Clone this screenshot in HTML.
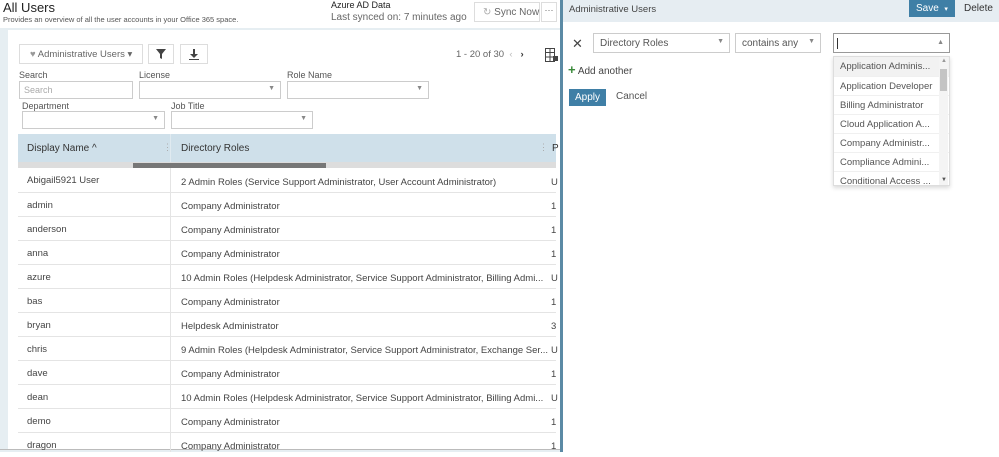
<!DOCTYPE html>
<html><head><meta charset="utf-8"><style>
*{box-sizing:border-box;margin:0;padding:0}
body{width:999px;height:452px;overflow:hidden;font-family:"Liberation Sans",sans-serif;background:#fff;position:relative;color:#333;white-space:nowrap}
.a{position:absolute}
.sel{position:absolute;border:1px solid #ccc;background:#fff;height:18px}
.sel:after{content:"▼";position:absolute;right:5px;top:50%;margin-top:-5px;font-size:7px;color:#888}
.lbl{position:absolute;font-size:9px;color:#555}
.row{position:absolute;left:18px;width:538px;height:24px;border-bottom:1px solid #e4e4e4;font-size:9.5px;color:#444}
.row span{position:absolute;top:7px}
</style></head><body>
<div class="a" style="left:0;top:28px;width:560px;height:424px;background:#e6eef2"></div>
<div class="a" style="left:8px;top:30px;width:552px;height:420px;background:#fff"></div>
<div class="a" style="left:0;top:449px;width:560px;height:1px;background:#bbb"></div>
<div class="a" style="left:3px;top:0;font-size:13px;color:#222">All Users</div>
<div class="a" style="left:3px;top:15px;font-size:7.5px;color:#555">Provides an overview of all the user accounts in your Office 365 space.</div>
<div class="a" style="left:331px;top:0;font-size:9px;color:#222">Azure AD Data</div>
<div class="a" style="left:331px;top:12px;font-size:10px;color:#666">Last synced on: 7 minutes ago</div>
<div class="a" style="left:474px;top:2px;width:66px;height:20px;border:1px solid #ddd;font-size:10px;color:#666;padding:4px 0 0 8px"><span style="color:#aaa">↻</span> Sync Now</div>
<div class="a" style="left:541px;top:2px;width:16px;height:20px;border:1px solid #ddd;font-size:9px;color:#666;text-align:center;line-height:14px">···</div>

<div class="a" style="left:19px;top:44px;width:124px;height:20px;border:1px solid #ddd;font-size:9.5px;color:#666;padding:4px 0 0 10px"><span style="color:#999">♥</span> Administrative Users ▾</div>
<div class="a" style="left:148px;top:44px;width:26px;height:20px;border:1px solid #ddd;text-align:center"><svg width="10" height="10" viewBox="0 0 10 10" style="margin-top:4px"><path d="M0 0H10L6 5V10L4 9V5Z" fill="#444"/></svg></div>
<div class="a" style="left:180px;top:44px;width:28px;height:20px;border:1px solid #ddd;text-align:center"><svg width="10" height="11" viewBox="0 0 10 11" style="margin-top:4px"><path d="M4 0H6V5H9L5 9L1 5H4Z M0 10H10V11H0Z" fill="#444"/></svg></div>
<div class="a" style="left:456px;top:49px;font-size:9.5px;color:#666">1 - 20 of 30 &nbsp;<span style="color:#bbb">‹</span> &nbsp;&nbsp;<b style="color:#333">›</b></div>
<svg class="a" style="left:545px;top:48px" width="13" height="14" viewBox="0 0 13 14"><path d="M0.5 0.5H9.5V13.5H0.5Z M0.5 4.5H9.5 M0.5 9H9.5 M5 0.5V13.5" stroke="#444" fill="none"/><rect x="8" y="8" width="5" height="5" fill="#444"/></svg>

<div class="lbl" style="left:19px;top:70px">Search</div>
<div class="a" style="left:19px;top:81px;width:114px;height:18px;border:1px solid #ccc;font-size:9px;color:#aaa;padding:3px 0 0 4px">Search</div>
<div class="lbl" style="left:139px;top:70px">License</div>
<div class="sel" style="left:139px;top:81px;width:142px"></div>
<div class="lbl" style="left:287px;top:70px">Role Name</div>
<div class="sel" style="left:287px;top:81px;width:142px"></div>
<div class="lbl" style="left:22px;top:101px">Department</div>
<div class="sel" style="left:22px;top:111px;width:143px"></div>
<div class="lbl" style="left:171px;top:101px">Job Title</div>
<div class="sel" style="left:171px;top:111px;width:142px"></div>

<div class="a" style="left:18px;top:134px;width:538px;height:28px;background:#cfe0ea"></div>
<div class="a" style="left:27px;top:143px;font-size:10px;color:#333">Display Name ^</div>
<div class="a" style="left:163px;top:142px;font-size:9px;color:#aaa">⋮</div>
<div class="a" style="left:170px;top:134px;width:1px;height:28px;background:#e0eaf0"></div>
<div class="a" style="left:181px;top:143px;font-size:10px;color:#333">Directory Roles</div>
<div class="a" style="left:539px;top:142px;font-size:9px;color:#aaa">⋮</div>
<div class="a" style="left:552px;top:143px;font-size:10px">P</div>
<div class="a" style="left:18px;top:162px;width:538px;height:6px;background:#ddd"></div>
<div class="a" style="left:133px;top:163px;width:193px;height:5px;background:#777"></div>
<div class="a" style="left:170px;top:168px;width:1px;height:284px;background:#e4e4e4"></div>

<div class="row" style="top:169px"><span style="left:9px;top:6px">Abigail5921 User</span><span style="left:163px;top:8px">2 Admin Roles (Service Support Administrator, User Account Administrator)</span><span style="left:533px;top:8px">U</span></div>
<div class="row" style="top:193px"><span style="left:9px">admin</span><span style="left:163px;top:8px">Company Administrator</span><span style="left:533px;top:8px">1</span></div>
<div class="row" style="top:217px"><span style="left:9px">anderson</span><span style="left:163px;top:8px">Company Administrator</span><span style="left:533px;top:8px">1</span></div>
<div class="row" style="top:241px"><span style="left:9px">anna</span><span style="left:163px;top:8px">Company Administrator</span><span style="left:533px;top:8px">1</span></div>
<div class="row" style="top:265px"><span style="left:9px">azure</span><span style="left:163px;top:8px">10 Admin Roles (Helpdesk Administrator, Service Support Administrator, Billing Admi...</span><span style="left:533px;top:8px">U</span></div>
<div class="row" style="top:289px"><span style="left:9px">bas</span><span style="left:163px;top:8px">Company Administrator</span><span style="left:533px;top:8px">1</span></div>
<div class="row" style="top:313px"><span style="left:9px">bryan</span><span style="left:163px;top:8px">Helpdesk Administrator</span><span style="left:533px;top:8px">3</span></div>
<div class="row" style="top:337px"><span style="left:9px">chris</span><span style="left:163px;top:8px">9 Admin Roles (Helpdesk Administrator, Service Support Administrator, Exchange Ser...</span><span style="left:533px;top:8px">U</span></div>
<div class="row" style="top:361px"><span style="left:9px">dave</span><span style="left:163px;top:8px">Company Administrator</span><span style="left:533px;top:8px">1</span></div>
<div class="row" style="top:385px"><span style="left:9px">dean</span><span style="left:163px;top:8px">10 Admin Roles (Helpdesk Administrator, Service Support Administrator, Billing Admi...</span><span style="left:533px;top:8px">U</span></div>
<div class="row" style="top:409px"><span style="left:9px">demo</span><span style="left:163px;top:8px">Company Administrator</span><span style="left:533px;top:8px">1</span></div>
<div class="row" style="top:433px;border:0"><span style="left:9px">dragon</span><span style="left:163px;top:8px">Company Administrator</span><span style="left:533px;top:8px">1</span></div>

<div class="a" style="left:560px;top:0;width:3px;height:452px;background:#5b8aa5"></div>
<div class="a" style="left:563px;top:0;width:436px;height:22px;background:#e6edf2"></div>
<div class="a" style="left:569px;top:4px;font-size:9.5px;color:#444">Administrative Users</div>
<div class="a" style="left:909px;top:0;width:46px;height:17px;background:#3f7fa6;color:#fff;font-size:10px;padding:3px 0 0 7px">Save &nbsp;<span style="font-size:7px">▾</span></div>
<div class="a" style="left:964px;top:3px;font-size:10px;color:#333">Delete</div>

<div class="a" style="left:572px;top:36px;font-size:13px;color:#444">✕</div>
<div class="sel" style="left:593px;top:33px;width:137px;height:20px;font-size:10px;color:#555;padding:4px 0 0 6px">Directory Roles</div>
<div class="sel" style="left:735px;top:33px;width:86px;height:20px;font-size:10px;color:#555;padding:4px 0 0 6px">contains any</div>
<div class="a" style="left:833px;top:33px;width:117px;height:20px;border:1px solid #999;background:#fff"><div style="position:absolute;left:3px;top:4px;width:1px;height:11px;background:#333"></div><span style="position:absolute;right:5px;top:5px;font-size:7px;color:#888">▲</span></div>
<div class="a" style="left:568px;top:62px;font-size:10px;color:#444"><b style="color:#3a8a3a;font-size:13px">+</b> Add another</div>
<div class="a" style="left:569px;top:89px;width:37px;height:17px;background:#3f7fa6;color:#fff;font-size:10px;padding:3px 0 0 6px">Apply</div>
<div class="a" style="left:616px;top:91px;font-size:10px;color:#555">Cancel</div>

<div class="a" style="left:833px;top:56px;width:117px;height:130px;background:#fff;border:1px solid #ddd;box-shadow:0 2px 4px rgba(0,0,0,.15);font-size:9.5px;color:#555;overflow:hidden">
<div style="height:19px;padding:4px 0 0 6px;background:#f2f2f2">Application Adminis...</div>
<div style="height:19px;padding:4px 0 0 6px;border-top:1px solid #f0f0f0">Application Developer</div>
<div style="height:19px;padding:4px 0 0 6px;border-top:1px solid #f0f0f0">Billing Administrator</div>
<div style="height:19px;padding:4px 0 0 6px;border-top:1px solid #f0f0f0">Cloud Application A...</div>
<div style="height:19px;padding:4px 0 0 6px;border-top:1px solid #f0f0f0">Company Administr...</div>
<div style="height:19px;padding:4px 0 0 6px;border-top:1px solid #f0f0f0">Compliance Admini...</div>
<div style="height:19px;padding:4px 0 0 6px;border-top:1px solid #f0f0f0">Conditional Access ...</div>
<div style="position:absolute;right:1px;top:0;width:9px;height:128px;background:#f4f4f4"></div>
<div style="position:absolute;right:2px;top:12px;width:7px;height:22px;background:#c4c4c4"></div>
<div style="position:absolute;right:2px;top:1px;font-size:6px;color:#999">▲</div>
<div style="position:absolute;right:2px;bottom:2px;font-size:6px;color:#555">▼</div>
</div>
</body></html>
